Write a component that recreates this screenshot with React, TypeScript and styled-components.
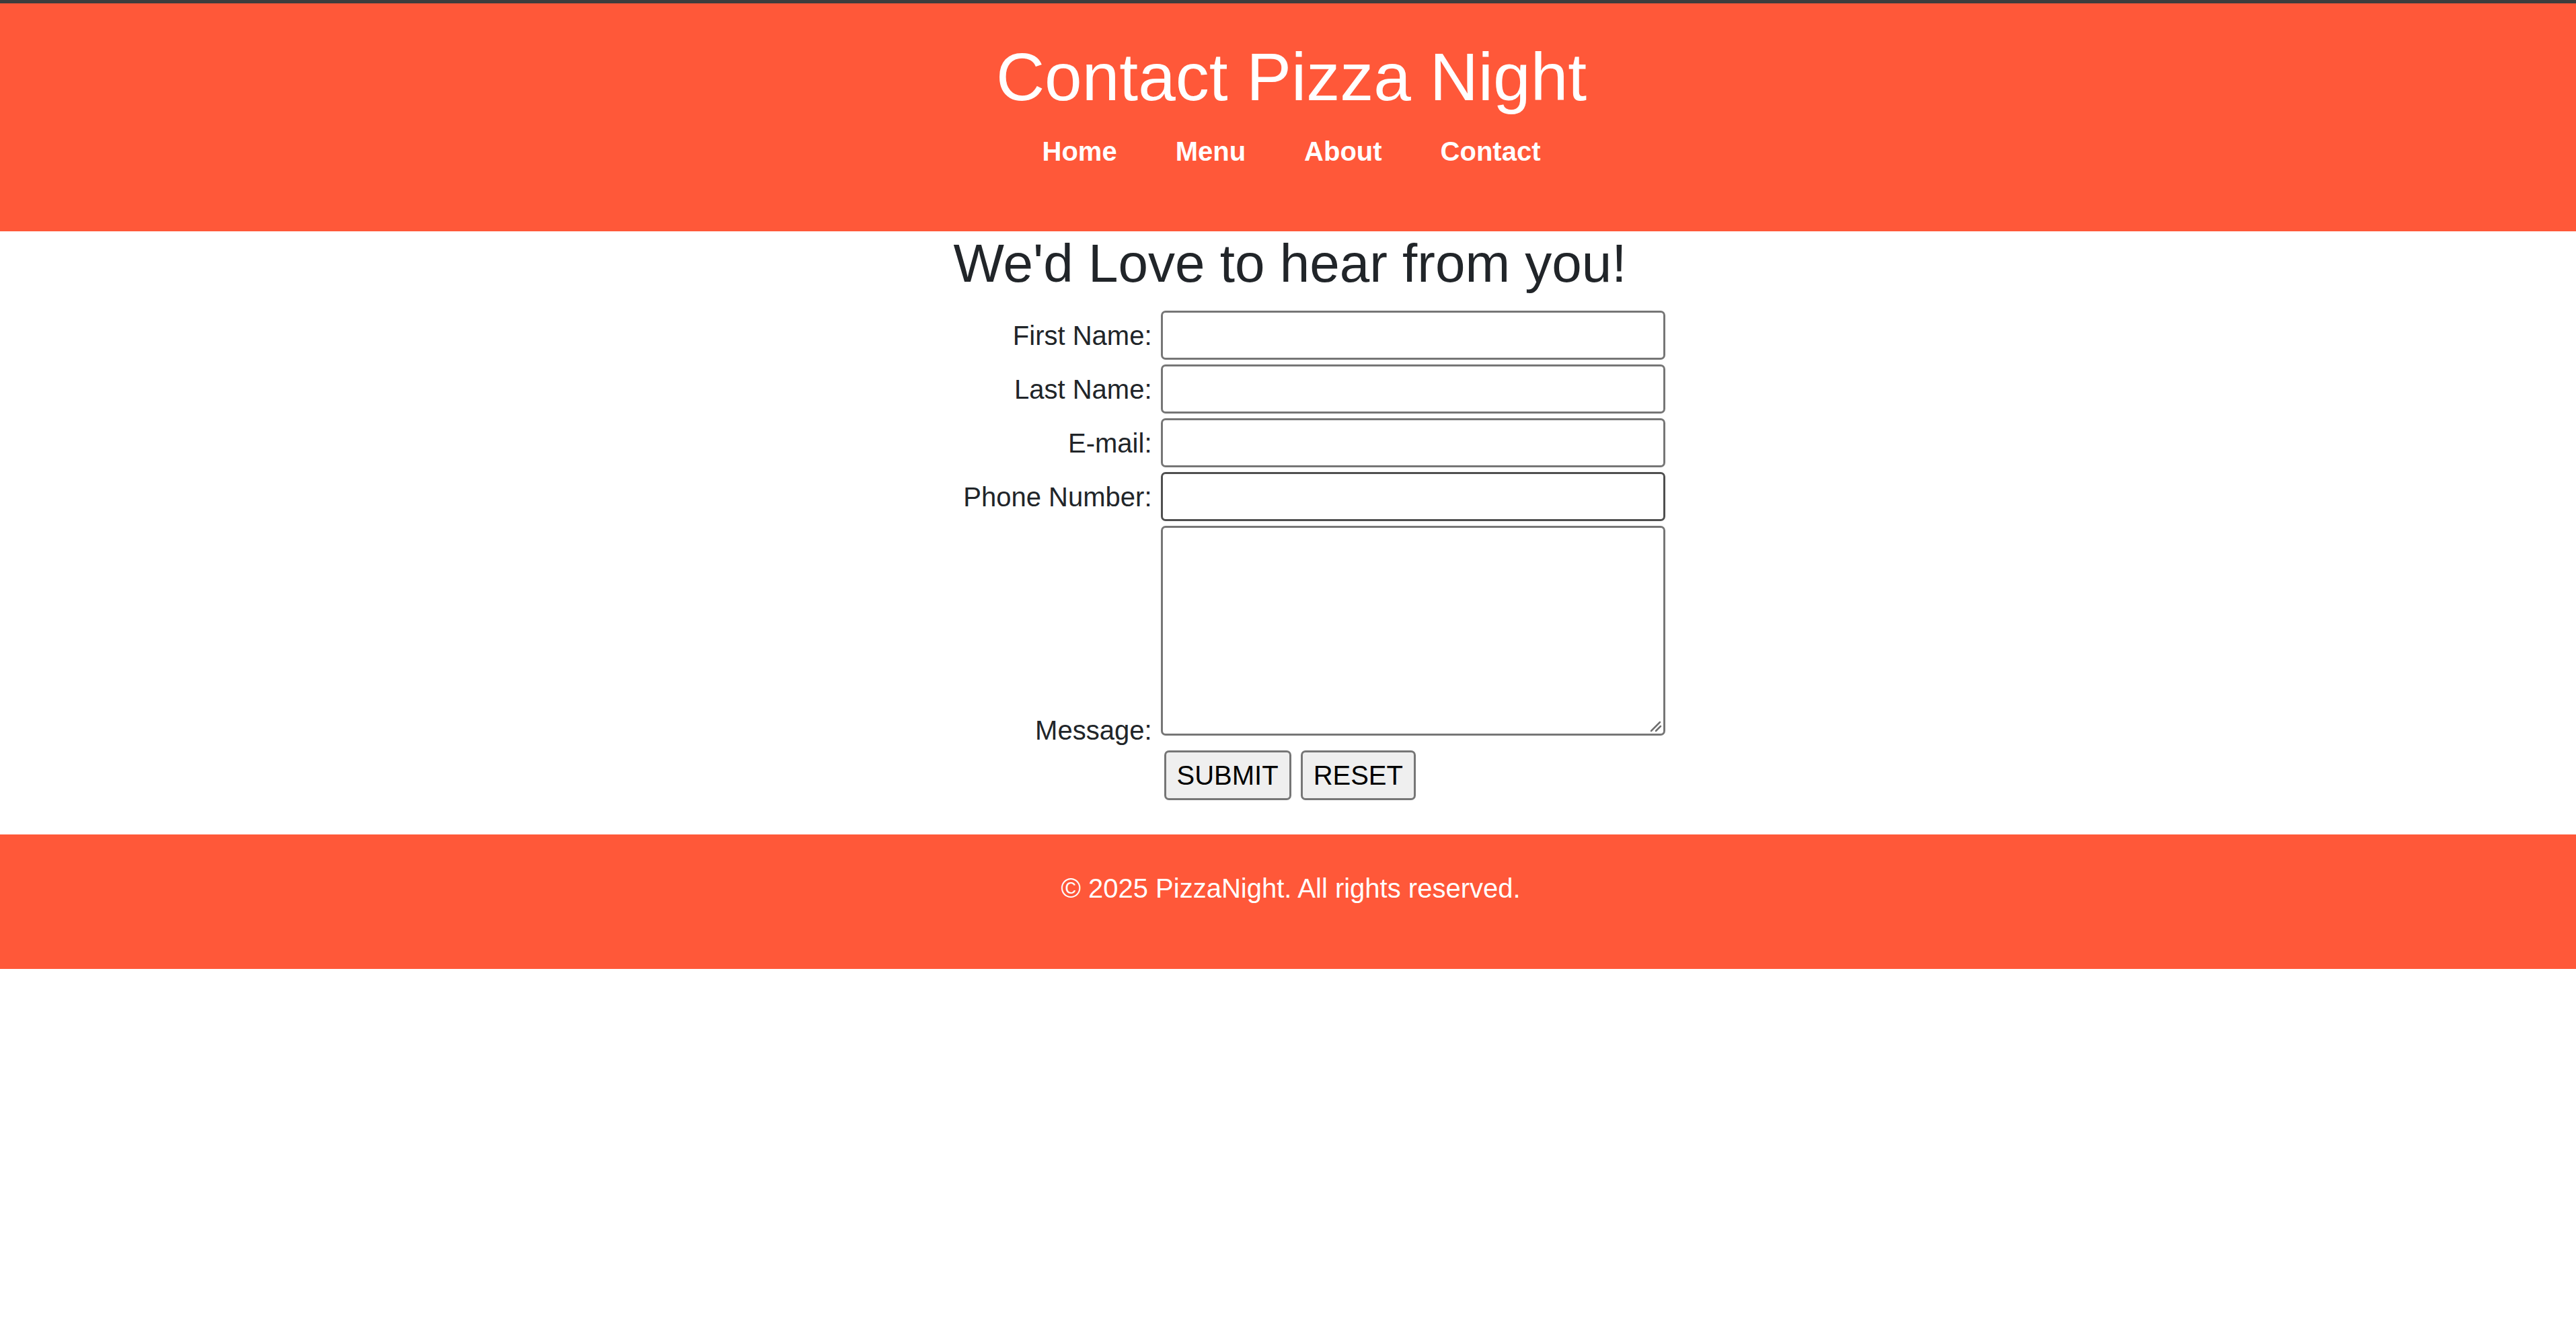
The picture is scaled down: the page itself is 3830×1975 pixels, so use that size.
import React from "react";
import styled, { createGlobalStyle } from "styled-components";

const GlobalStyle = createGlobalStyle`
  html, body {
    margin: 0;
    padding: 0;
    background: #ffffff;
  }
  body {
    font-family: "Liberation Sans", Arial, Helvetica, sans-serif;
    color: #212529;
  }
  * { box-sizing: border-box; }
`;

const ORANGE = "#ff5839";

const Header = styled.header`
  display: flex;
  flex-direction: column;
  align-items: center;
  height: 344px;
  background: ${ORANGE};
  border-top: 5px solid #3d3d3d;
  padding-top: 52px;
  padding-left: 10px;
`;

const Title = styled.h1`
  margin: 0;
  font-size: 100px;
  line-height: 115px;
  font-weight: 400;
  color: #ffffff;
`;

const Nav = styled.nav`
  display: flex;
  gap: 87px;
  margin-top: 30px;
`;

const NavLink = styled.a`
  font-size: 40px;
  line-height: 46px;
  font-weight: 700;
  color: #ffffff;
  text-decoration: none;
`;

const Main = styled.main`
  display: flex;
  flex-direction: column;
  align-items: center;
  padding-top: 2px;
`;

const Heading = styled.h2`
  margin: 0 0 0 6px;
  font-size: 80px;
  line-height: 92px;
  font-weight: 400;
  color: #212529;
`;

const Form = styled.form`
  display: grid;
  grid-template-columns: 280px 750px;
  column-gap: 13px;
  row-gap: 7px;
  margin-top: 24px;
  padding-left: 78px;
`;

const Label = styled.label<{ $bottom?: boolean }>`
  justify-self: end;
  align-self: ${(p) => (p.$bottom ? "end" : "center")};
  margin-bottom: ${(p) => (p.$bottom ? "-15px" : "0")};
  font-size: 40px;
  line-height: 46px;
  color: #212529;
  white-space: nowrap;
`;

const TextInput = styled.input<{ $dark?: boolean }>`
  display: block;
  width: 750px;
  height: 73px;
  margin: 0;
  padding: 0 6px;
  border: 3px solid ${(p) => (p.$dark ? "#4f4f4f" : "#767676")};
  border-radius: 7px;
  background: #ffffff;
  font-family: inherit;
  font-size: 40px;
  outline: none;
`;

const AreaWrap = styled.div`
  position: relative;
  width: 750px;
  height: 312px;
`;

const TextArea = styled.textarea`
  display: block;
  width: 100%;
  height: 100%;
  margin: 0;
  padding: 6px;
  border: 3px solid #767676;
  border-radius: 7px;
  background: #ffffff;
  resize: none;
  font-family: inherit;
  font-size: 40px;
  outline: none;
`;

const Grip = styled.svg`
  position: absolute;
  right: 5px;
  bottom: 5px;
  width: 20px;
  height: 20px;
  pointer-events: none;
`;

const Buttons = styled.div`
  grid-column: 2;
  display: flex;
  gap: 14px;
  margin-top: 15px;
  margin-left: 5px;
`;

const Button = styled.button`
  height: 74px;
  padding: 0 16px;
  border: 3px solid #767676;
  border-radius: 7px;
  background: #efefef;
  color: #000000;
  font-family: inherit;
  font-size: 40px;
  line-height: 46px;
  cursor: pointer;
`;

const Footer = styled.footer`
  margin-top: 51px;
  height: 200px;
  background: ${ORANGE};
  padding-top: 57px;
  padding-left: 8px;
  text-align: center;
`;

const FooterText = styled.p`
  margin: 0;
  font-size: 40px;
  line-height: 46px;
  color: #ffffff;
`;

const fields = [
  { id: "first", label: "First Name:", type: "text" },
  { id: "last", label: "Last Name:", type: "text" },
  { id: "email", label: "E-mail:", type: "email" },
  { id: "phone", label: "Phone Number:", type: "tel", dark: true },
];

export default function App() {
  return (
    <>
      <GlobalStyle />
      <Header>
        <Title>Contact Pizza Night</Title>
        <Nav>
          <NavLink href="#">Home</NavLink>
          <NavLink href="#">Menu</NavLink>
          <NavLink href="#">About</NavLink>
          <NavLink href="#">Contact</NavLink>
        </Nav>
      </Header>
      <Main>
        <Heading>We'd Love to hear from you!</Heading>
        <Form onSubmit={(e) => e.preventDefault()}>
          {fields.map((f) => (
            <React.Fragment key={f.id}>
              <Label htmlFor={f.id}>{f.label}</Label>
              <TextInput id={f.id} type={f.type} $dark={f.dark} />
            </React.Fragment>
          ))}
          <Label htmlFor="message" $bottom>
            Message:
          </Label>
          <AreaWrap>
            <TextArea id="message" />
            <Grip viewBox="0 0 20 20">
              <line x1="4" y1="18" x2="17" y2="5" stroke="#6f6f6f" strokeWidth="2.5" strokeLinecap="round" />
              <line x1="11" y1="18" x2="18" y2="11" stroke="#6f6f6f" strokeWidth="2.5" strokeLinecap="round" />
            </Grip>
          </AreaWrap>
          <Buttons>
            <Button type="submit">SUBMIT</Button>
            <Button type="reset">RESET</Button>
          </Buttons>
        </Form>
      </Main>
      <Footer>
        <FooterText>© 2025 PizzaNight. All rights reserved.</FooterText>
      </Footer>
    </>
  );
}
